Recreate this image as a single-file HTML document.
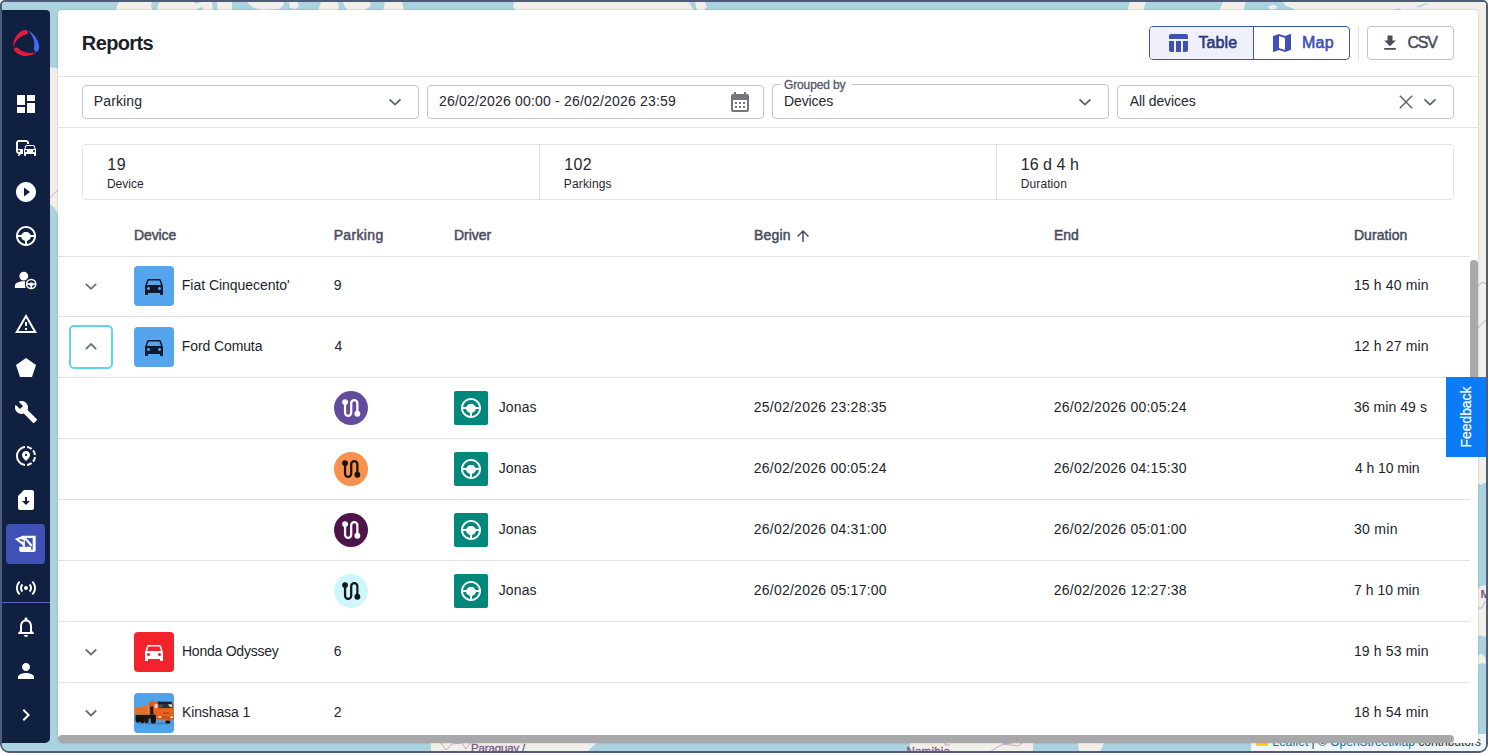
<!DOCTYPE html>
<html lang="en">
<head>
<meta charset="utf-8">
<title>Reports</title>
<style>
*{box-sizing:border-box;margin:0;padding:0}
html,body{width:1488px;height:753px;overflow:hidden;background:#fff}
body{font-family:"Liberation Sans",sans-serif;color:#1c1f2b;font-size:14px;position:relative}
.abs{position:absolute}
#frame{position:absolute;left:0;top:0;width:1488px;height:753px;border:2px solid #4e5c79;border-radius:5px 5px 9px 9px;overflow:hidden;background:#aad3df}
#map{position:absolute;left:0;top:0;width:1484px;height:749px}
#side{position:absolute;left:0;top:8px;width:48px;height:733px;background:#0f2040;border-radius:0 4px 5px 0}
#side svg{position:absolute;left:12px;width:24px;height:24px;fill:#fff}
#side .act{position:absolute;left:4px;top:514px;width:39px;height:40px;border-radius:4px;background:#3f51b5}
#side .sep{position:absolute;left:0;top:592px;width:48px;height:1px;background:#5562c0}
#panel{position:absolute;left:56px;top:8px;width:1420px;height:733px;background:#fff;border-radius:4px;overflow:hidden;box-shadow:0 0 2px rgba(0,0,0,.25)}
.hl{position:absolute;left:0;height:1px;background:#e2e2e2}
.t{position:absolute;white-space:nowrap}
.sel{position:absolute;width:337px;height:34px;border:1px solid #c4c4c4;border-radius:4px;background:#fff}
</style>
</head>
<body>
<div id="frame">
<div id="map">
<svg width="1484" height="749" viewBox="2 2 1484 749" style="position:absolute;left:0;top:0">
<rect x="0" y="0" width="1490" height="755" fill="#aad3df"/>
<g fill="#f2efe9">
<path d="M119 2 L152 2 L151 6 L153 11 L116 11 L117 6 Z"/>
<path d="M160 2 L194 2 L196 4 L201 2 L212 2 L213 11 L204 11 L202 7 L197 9 L195 11 L157 11 L158 5 Z"/>
<path d="M217 2 L232 2 L232 11 L218 11 Z"/>
<path d="M247 2 L284 2 L283 6 L279 9 L262 10 L254 8 L250 5 Z"/>
<path d="M289 2 L298 2 L299 6 L296 9 L290 8 Z"/>
<path d="M321 2 L338 2 L339 8 L336 11 L318 11 Z"/>
<path d="M343 2 L370 2 L371 6 L366 9 L362 11 L348 11 L345 7 Z"/>
<path d="M385 2 L402 2 L404 11 L383 11 Z"/>
<path d="M514 2 L689 2 L691 6 L694 11 L516 11 L513 7 Z"/>
<path d="M695 2 L705 2 L707 7 L703 11 L697 10 Z"/>
<path d="M1130 2 L1146 2 L1143 11 L1127 11 Z"/>
<path d="M1223 2 L1246 2 L1243 11 L1219 11 Z"/>
<path d="M1283 2 L1488 2 L1488 24 L1470 24 L1470 11 L1297 11 L1292 8 L1286 6 Z"/>
<path d="M1268 7 L1272 4.500 L1277 6 L1276 9 L1270 9.500 Z"/>
<path d="M1478 10 L1488 10 L1488 482 L1484 483 L1481 485 L1478 484 Z"/>
<path d="M1478 589 L1481 586 L1488 585 L1488 634 L1484 637 L1480 635 L1478 636 Z"/>
<path d="M1478 655 L1482 654 L1485 657 L1486 664 L1482 663 L1478 665 Z"/>
<path d="M50 67 L53 68 L55 67.500 L58 69 L58 214 L56 210 L54 207 L52 206 L50 204 Z"/>
<path d="M431 743 L597 743 L592 747 L588 751 L431 751 Z"/>
<path d="M910 743 L1033 743 L1033 751 L910 751 Z"/>
<path d="M1078 743 L1104 743 L1100 751 L1079 751 Z"/>
</g>
<g fill="#aad3df"><path d="M1394 9.500 L1400 8.500 L1401 10 L1396 11 Z"/><path d="M1416 6.500 L1427 3 L1428 4 L1418 7.500 Z"/><path d="M441 744 L447 751 L451 744 L449 744 L447 748 L443 744 Z" fill="none"/></g>
<g fill="none" stroke="#b89bc4" stroke-width="0.800"><path d="M441 743 L446 750 L452 744 L462 743 L466 749 L470 743"/><path d="M991 751 L1003 744 L1012 743 M1003 744 L1018 746 L1022 743"/><path d="M945 743 L945 745 L950 745"/>
<path d="M50 198 Q54 193 58 190"/><path d="M1478 286 Q1482 280 1486 284"/><path d="M1478 328 Q1482 322 1486 320"/><path d="M1478 608 L1482 608 L1485 601"/></g>
<text x="471" y="752.300" font-family="Liberation Sans, sans-serif" font-size="11.500" font-weight="400" fill="#7b5a8c" stroke="#7b5a8c" stroke-width="0.350" letter-spacing="-0.150">Paraguay /</text>
<text x="906.500" y="755.300" font-family="Liberation Sans, sans-serif" font-size="11.500" font-weight="400" fill="#7b5a8c" stroke="#7b5a8c" stroke-width="0.350" letter-spacing="0.200">Namibia</text>
<text x="1480.500" y="598" font-family="Liberation Sans, sans-serif" font-size="11.500" font-weight="700" fill="#7b5a8c">M</text>
</svg>
<div style="position:absolute;right:0;bottom:0;height:17px;padding:0 5px 0 5px;background:rgba(255,255,255,.8);font-size:12px;line-height:17px;color:#333;white-space:nowrap"><span style="display:inline-block;width:12px;height:8px;margin-right:4px;background:linear-gradient(#4c7be1 50%,#ffd500 50%)"></span><span style="color:#0078a8">Leaflet</span> <span>|</span> © <span style="color:#0078a8">OpenStreetMap</span> contributors</div>

</div>
<div id="side">
<svg style="left:0;top:10px;width:56px;height:48px" viewBox="0 0 878 753">
<path fill="#e8193f" d="M178 430 C 160 330, 230 190, 350 158 C 395 148, 420 180, 400 212 C 385 232, 330 235, 270 280 C 215 325, 195 380, 178 430 Z"/>
<path fill="#e8193f" d="M548 503 C 490 550, 400 580, 310 555 C 240 535, 185 490, 188 455 C 192 425, 235 425, 265 450 C 320 500, 420 540, 548 503 Z"/>
<path fill="#4766ff" d="M405 156 C 500 210, 580 320, 582 420 C 583 470, 560 500, 535 498 C 505 495, 495 450, 505 400 C 520 320, 470 230, 405 156 Z"/>
</svg>
<div class="act"></div><div class="sep"></div>
<svg style="top:82px" viewBox="0 0 24 24"><path d="M3 13h8V3H3v10zm0 8h8v-6H3v6zm10 0h8V11h-8v10zm0-18v6h8V3h-8z"/></svg>
<svg style="top:126px" viewBox="0 0 24 24"><path d="M12 4H5C3.340 4 2 5.340 2 7v8c0 1.660 1.340 3 3 3l-1 1v1h1l2-2.030L9 18v-5H4V5.980L13 6v2h2V7c0-1.660-1.340-3-3-3zM5 14c.55 0 1 .45 1 1s-.45 1-1 1-1-.45-1-1 .45-1 1-1zm15.570-4.340c-.14-.4-.52-.66-.97-.66h-7.190c-.46 0-.83.26-.98.66L10 13.770l.010 5.510c0 .38.310.72.690.72h.62c.38 0 .68-.38.680-.76V18h8v1.240c0 .38.310.76.690.76h.61c.38 0 .69-.34.690-.72l.010-1.370v-4.140l-1.430-4.110zm-8.160.34h7.190l1.030 3h-9.250l1.030-3zM12 16c-.55 0-1-.45-1-1s.45-1 1-1 1 .45 1 1-.45 1-1 1zm8 0c-.55 0-1-.45-1-1s.45-1 1-1 1 .45 1 1-.45 1-1 1z"/></svg>
<svg style="top:170px" viewBox="0 0 24 24"><path d="M12 2C6.480 2 2 6.480 2 12s4.480 10 10 10 10-4.480 10-10S17.520 2 12 2zm-2 14.500v-9l6 4.500-6 4.500z"/></svg>
<svg style="top:214px" viewBox="0 0 24 24"><path d="M13,19.92C14.8,19.7 16.35,18.95 17.65,17.65C18.95,16.35 19.7,14.8 19.92,13H16.92C16.7,14 16.24,14.84 15.54,15.54C14.84,16.24 14,16.7 13,16.92V19.92M10,8H14L17,11H19.92C19.67,9.05 18.79,7.38 17.27,6C15.76,4.66 14,4 12,4C10,4 8.24,4.66 6.73,6C5.21,7.38 4.33,9.05 4.08,11H7L10,8M11,19.92V16.92C10,16.7 9.16,16.24 8.46,15.54C7.76,14.84 7.3,14 7.08,13H4.08C4.3,14.77 5.05,16.3 6.35,17.6C7.65,18.9 9.2,19.67 11,19.92M12,2C14.75,2 17.1,3 19.05,4.95C21,6.9 22,9.25 22,12C22,14.75 21,17.1 19.05,19.05C17.1,21 14.75,22 12,22C9.25,22 6.9,21 4.95,19.05C3,17.1 2,14.75 2,12C2,9.25 3,6.9 4.95,4.95C6.9,3 9.25,2 12,2Z"/></svg>
<svg style="top:258px" viewBox="0 0 24 24"><circle cx="9.800" cy="8.100" r="4.450"/><path d="M0.900 19.900 V17.700 C0.900 14.900 5.500 13.300 9.800 13.300 C11.300 13.300 12.600 13.500 13.800 13.800 C11.900 15.100 11 17.400 11.600 19.900 Z"/>
<circle cx="17.200" cy="16" r="6.400" fill="#0f2040"/><circle cx="17.200" cy="16" r="4.550" fill="none" stroke="#fff" stroke-width="1.600"/>
<path d="M12.900 15.300 L15.300 15.300 L16.200 14.400 H18.200 L19.100 15.300 L21.500 15.300 V16.700 L19.300 16.700 C19 17.600 18.500 18.100 17.900 18.300 V20.400 H16.500 V18.300 C15.900 18.100 15.400 17.600 15.100 16.700 L12.900 16.700 Z"/></svg>
<svg style="top:302px" viewBox="0 0 24 24"><path d="M12 5.990L19.530 19H4.470L12 5.990M12 2L1 21h22L12 2zm1 14h-2v2h2v-2zm0-6h-2v4h2v-4z"/></svg>
<svg style="top:346px" viewBox="0 0 24 24"><path d="M2 9l4 12h12l4-12-10-7z"/></svg>
<svg style="top:390px" viewBox="0 0 24 24"><path d="M22.700 19l-9.100-9.100c.9-2.300.4-5-1.500-6.900-2-2-5-2.400-7.400-1.300L9 6 6 9 1.600 4.700C.4 7.100.9 10.100 2.900 12.100c1.900 1.900 4.600 2.400 6.900 1.500l9.100 9.100c.4.4 1 .4 1.400 0l2.300-2.300c.5-.4.5-1.100.1-1.400z"/></svg>
<svg style="top:434px" viewBox="0 0 24 24"><path d="M13.020 19.930v2.020c2.010-.2 3.840-1 5.320-2.210l-1.420-1.430c-1.110.86-2.440 1.440-3.900 1.620zM4.030 12c0-4.050 3.030-7.410 6.950-7.930V2.050C5.950 2.580 2.030 6.840 2.030 12c0 5.160 3.920 9.420 8.950 9.950v-2.020c-3.920-.52-6.950-3.880-6.950-7.930zm15.920-1h2.020c-.2-2.010-1-3.840-2.210-5.320l-1.430 1.430c.86 1.100 1.440 2.430 1.620 3.890zm-1.610-6.740c-1.480-1.210-3.320-2.010-5.320-2.210v2.020c1.460.18 2.790.76 3.900 1.620l1.420-1.430zm-.010 12.640l1.430 1.420c1.210-1.480 2.010-3.310 2.210-5.320h-2.020c-.18 1.460-.76 2.790-1.620 3.900zM16 11.100C16 8.610 14.100 7 12 7s-4 1.610-4 4.100c0 1.660 1.330 3.630 4 5.900 2.670-2.270 4-4.240 4-5.900zm-4 .9c-.59 0-1.070-.48-1.070-1.070 0-.59.48-1.070 1.070-1.070s1.070.48 1.070 1.070c0 .59-.48 1.070-1.070 1.070z"/></svg>
<svg style="top:478px" viewBox="0 0 24 24"><path d="M18 2h-8L4 8v12c0 1.100.9 2 2 2h12c1.100 0 2-.9 2-2V4c0-1.100-.9-2-2-2zm-6 15l-4-4h3V9.020L13 9v4h3l-4 4z"/></svg>
<svg style="left:8px;top:520px;width:32px;height:28px" viewBox="0 0 861 753">
<path d="M330 155 H690 V545 Q690 590 640 590 H290 Q250 590 250 550 V450 H570 V530 H610 V215 H330 Z"/>
<path fill-rule="evenodd" d="M130 240 L330 158 L425 215 L400 300 V450 H340 V405 Z M235 252 Q310 222 392 300 Q330 350 235 252 Z"/>
<path d="M410 225 L565 405" fill="none" stroke="#fff" stroke-width="58" stroke-linecap="round"/></svg>
<svg style="top:566px" viewBox="0 0 24 24"><path d="M7.760 16.240C6.670 15.160 6 13.660 6 12s.67-3.160 1.760-4.240l1.420 1.420C8.450 9.900 8 10.900 8 12c0 1.100.45 2.100 1.170 2.830l-1.410 1.410zm8.480 0C17.330 15.160 18 13.660 18 12s-.67-3.160-1.760-4.240l-1.420 1.420C15.550 9.900 16 10.900 16 12c0 1.100-.45 2.100-1.170 2.830l1.410 1.410zM12 10c-1.100 0-2 .9-2 2s.9 2 2 2 2-.9 2-2-.9-2-2-2zm8 2c0 2.210-.9 4.210-2.350 5.650l1.420 1.420C20.880 17.260 22 14.760 22 12s-1.120-5.260-2.930-7.070l-1.420 1.420C19.100 7.790 20 9.790 20 12zM6.350 6.350L4.930 4.930C3.120 6.740 2 9.240 2 12s1.120 5.260 2.930 7.070l1.420-1.420C4.900 16.210 4 14.210 4 12s.9-4.210 2.350-5.650z"/></svg>
<svg style="top:605px" viewBox="0 0 24 24"><path d="M12 22c1.100 0 2-.9 2-2h-4c0 1.100.9 2 2 2zm6-6v-5c0-3.070-1.630-5.640-4.500-6.320V4c0-.83-.67-1.500-1.500-1.500s-1.500.67-1.500 1.500v.68C7.640 5.360 6 7.920 6 11v5l-2 2v1h16v-1l-2-2zm-2 1H8v-6c0-2.480 1.510-4.500 4-4.500s4 2.020 4 4.500v6z"/></svg>
<svg style="top:649px" viewBox="0 0 24 24"><path d="M12 12c2.210 0 4-1.790 4-4s-1.790-4-4-4-4 1.790-4 4 1.790 4 4 4zm0 2c-2.670 0-8 1.340-8 4v2h16v-2c0-2.660-5.330-4-8-4z"/></svg>
<svg style="top:693px" viewBox="0 0 24 24"><path d="M10 6L8.590 7.410 13.170 12l-4.580 4.590L10 18l6-6z"/></svg>
</div>
<div id="panel">
<div class="hl" style="top:66px;width:1420px"></div>
<div class="hl" style="top:117px;width:1420px"></div>
<div class="abs" style="left:1091px;top:16px;width:201px;height:34px;border:1px solid #3f51b5;border-radius:4px;overflow:hidden;background:#fff"><div class="abs" style="left:0;top:0;width:104px;height:32px;background:#eff0fa;border-right:1px solid #3f51b5"></div></div>
<svg class="abs" style="left:1108.00px;top:21.00px" width="24" height="24" viewBox="0 0 24 24" fill="#3f51b5"><path d="M10 10.02h5V21h-5zM17 21h3c1.100 0 2-.9 2-2v-9h-5v11zm3-18H5c-1.100 0-2 .9-2 2v3h19V5c0-1.100-.9-2-2-2zM3 19c0 1.100.9 2 2 2h3V10H3v9z"/></svg>
<svg class="abs" style="left:1212.00px;top:21.00px" width="24" height="24" viewBox="0 0 24 24" fill="#3f51b5"><path d="M20.5 3l-.16.03L15 5.100 9 3 3.360 4.900c-.21.070-.36.250-.36.480V20.500c0 .28.220.5.500.5l.16-.030L9 18.900l6 2.100 5.640-1.900c.21-.070.36-.250.360-.480V3.500c0-.28-.22-.5-.5-.5zM15 19l-6-2.110V5l6 2.110V19z"/></svg>
<div class="abs" style="left:1300px;top:16px;width:1px;height:34px;background:#e2e2e2"></div>
<div class="abs" style="left:1309px;top:16px;width:87px;height:34px;border:1px solid #c4c4c4;border-radius:4px;background:#fff"></div>
<svg class="abs" style="left:1321.50px;top:23.00px" width="20" height="20" viewBox="0 0 24 24" fill="#4a4c5e"><path d="M19 9h-4V3H9v6H5l7 7 7-7zM5 18v2h14v-2H5z"/></svg>
<div class="sel" style="left:24px;top:75px"></div>
<svg class="abs" style="left:0;top:0;overflow:visible" width="1" height="1"><path d="M331.50 89.30 L337.00 94.50 L342.50 89.30" fill="none" stroke="#5b5e6b" stroke-width="1.7"/></svg>
<div class="sel" style="left:369px;top:75px"></div>
<div class="sel" style="left:714px;top:74px;height:35px"></div>
<svg class="abs" style="left:0;top:0;overflow:visible" width="1" height="1"><path d="M1021.50 89.30 L1027.00 94.50 L1032.50 89.30" fill="none" stroke="#5b5e6b" stroke-width="1.7"/></svg>
<div class="sel" style="left:1059px;top:75px"></div>
<svg class="abs" style="left:0;top:0;overflow:visible" width="1" height="1"><path d="M1366.50 89.30 L1372.00 94.50 L1377.50 89.30" fill="none" stroke="#5b5e6b" stroke-width="1.7"/></svg>
<svg class="abs" style="left:670.00px;top:80.00px" width="24" height="24" viewBox="0 0 24 24" fill="#75777f"><path d="M19 4h-1V2h-2v2H8V2H6v2H5c-1.110 0-1.990.9-1.990 2L3 20c0 1.100.89 2 2 2h14c1.100 0 2-.9 2-2V6c0-1.100-.9-2-2-2zm0 16H5V10h14v10zM9 14H7v-2h2v2zm4 0h-2v-2h2v2zm4 0h-2v-2h2v2zm-8 4H7v-2h2v2zm4 0h-2v-2h2v2zm4 0h-2v-2h2v2z"/></svg>
<div class="abs" style="left:723px;top:74px;width:71px;height:4px;background:#fff"></div>
<svg class="abs" style="left:1341.10px;top:84.80px" width="14" height="14" viewBox="0 0 14 14"><path d="M0.800 0.800 L13.200 13.200 M13.200 0.800 L0.800 13.200" fill="none" stroke="#5b5e6b" stroke-width="1.400"/></svg>
<div class="abs" style="left:24px;top:134px;width:1372px;height:56px;border:1px solid #e2e2e2;border-radius:4px"></div>
<div class="abs" style="left:481px;top:135px;width:1px;height:54px;background:#e2e2e2"></div>
<div class="abs" style="left:938px;top:135px;width:1px;height:54px;background:#e2e2e2"></div>
<svg class="abs" style="left:736.00px;top:217.00px" width="18" height="18" viewBox="0 0 24 24" fill="#4a4c5e"><path d="M4 12l1.410 1.410L11 7.830V20h2V7.830l5.580 5.590L20 12l-8-8-8 8z"/></svg>
<div class="hl" style="top:246px;width:1412px"></div>
<div class="hl" style="top:306px;width:1412px"></div>
<div class="hl" style="top:367px;width:1412px"></div>
<div class="hl" style="top:428px;width:1412px"></div>
<div class="hl" style="top:489px;width:1412px"></div>
<div class="hl" style="top:550px;width:1412px"></div>
<div class="hl" style="top:611px;width:1412px"></div>
<div class="hl" style="top:672px;width:1412px"></div>
<svg class="abs" style="left:0;top:0;overflow:visible" width="1" height="1"><path d="M27.80 273.80 L33.00 278.80 L38.20 273.80" fill="none" stroke="#6b6f7b" stroke-width="1.8"/></svg>
<div class="abs" style="left:76px;top:256px;width:40px;height:40px;border-radius:4px;background:#55a5ee;overflow:hidden"><svg class="abs" style="left:8px;top:8px" width="24" height="24" viewBox="0 0 24 24" fill="#0f1b2d"><path d="M18.92 6.01C18.72 5.42 18.16 5 17.5 5h-11c-.66 0-1.21.42-1.42 1.01L3 12v8c0 .55.45 1 1 1h1c.55 0 1-.45 1-1v-1h12v1c0 .55.45 1 1 1h1c.55 0 1-.45 1-1v-8l-2.080-5.990zM6.500 16c-.83 0-1.500-.67-1.500-1.500S5.670 13 6.500 13s1.500.67 1.500 1.500S7.330 16 6.500 16zm11 0c-.83 0-1.500-.67-1.500-1.500s.67-1.500 1.500-1.500 1.500.67 1.500 1.500-.67 1.500-1.500 1.500zM5 11l1.500-4.500h11L19 11H5z"/></svg></div>
<div class="abs" style="left:11px;top:315px;width:44px;height:44px;border:2px solid #62d4ea;border-radius:5px"></div>
<svg class="abs" style="left:0;top:0;overflow:visible" width="1" height="1"><path d="M27.80 339.10 L33.00 334.10 L38.20 339.10" fill="none" stroke="#6b6f7b" stroke-width="1.8"/></svg>
<div class="abs" style="left:76px;top:317px;width:40px;height:40px;border-radius:4px;background:#55a5ee;overflow:hidden"><svg class="abs" style="left:8px;top:8px" width="24" height="24" viewBox="0 0 24 24" fill="#0f1b2d"><path d="M18.92 6.01C18.72 5.42 18.16 5 17.5 5h-11c-.66 0-1.21.42-1.42 1.01L3 12v8c0 .55.45 1 1 1h1c.55 0 1-.45 1-1v-1h12v1c0 .55.45 1 1 1h1c.55 0 1-.45 1-1v-8l-2.080-5.990zM6.500 16c-.83 0-1.500-.67-1.500-1.500S5.670 13 6.500 13s1.500.67 1.500 1.500S7.330 16 6.500 16zm11 0c-.83 0-1.500-.67-1.500-1.500s.67-1.500 1.500-1.500 1.500.67 1.500 1.500-.67 1.500-1.500 1.500zM5 11l1.500-4.500h11L19 11H5z"/></svg></div>
<svg class="abs" style="left:276px;top:381px" width="34" height="34" viewBox="0 0 34 34"><circle cx="17" cy="17" r="17" fill="#634c9c"/><path d="M11.050 11.100 V21.700 a3.075 3.075 0 0 0 6.150 0 V12.300 a3.075 3.075 0 0 1 6.150 0 V22.700" fill="none" stroke="#ffffff" stroke-width="2.250"/><circle cx="11.050" cy="11.100" r="2.950" fill="#ffffff"/><circle cx="23.350" cy="22.750" r="2.950" fill="#ffffff"/></svg>
<div class="abs" style="left:396px;top:381px;width:34px;height:34px;border-radius:2px;background:#00897b"><svg class="abs" style="left:5px;top:5px" width="24" height="24" viewBox="0 0 24 24" fill="#fff"><path d="M13,19.92C14.8,19.7 16.35,18.95 17.65,17.65C18.95,16.35 19.7,14.8 19.92,13H16.92C16.7,14 16.24,14.84 15.54,15.54C14.84,16.24 14,16.7 13,16.92V19.92M10,8H14L17,11H19.92C19.67,9.05 18.79,7.38 17.27,6C15.76,4.66 14,4 12,4C10,4 8.24,4.66 6.73,6C5.21,7.38 4.33,9.05 4.08,11H7L10,8M11,19.92V16.92C10,16.7 9.16,16.24 8.46,15.54C7.76,14.84 7.3,14 7.08,13H4.08C4.3,14.77 5.05,16.3 6.35,17.6C7.65,18.9 9.2,19.67 11,19.92M12,2C14.75,2 17.1,3 19.05,4.95C21,6.9 22,9.25 22,12C22,14.75 21,17.1 19.05,19.05C17.1,21 14.75,22 12,22C9.25,22 6.9,21 4.95,19.05C3,17.1 2,14.75 2,12C2,9.25 3,6.9 4.95,4.95C6.9,3 9.25,2 12,2Z"/></svg></div>
<svg class="abs" style="left:276px;top:442px" width="34" height="34" viewBox="0 0 34 34"><circle cx="17" cy="17" r="17" fill="#f7914d"/><path d="M11.050 11.100 V21.700 a3.075 3.075 0 0 0 6.150 0 V12.300 a3.075 3.075 0 0 1 6.150 0 V22.700" fill="none" stroke="#1a1210" stroke-width="2.250"/><circle cx="11.050" cy="11.100" r="2.950" fill="#1a1210"/><circle cx="23.350" cy="22.750" r="2.950" fill="#1a1210"/></svg>
<div class="abs" style="left:396px;top:442px;width:34px;height:34px;border-radius:2px;background:#00897b"><svg class="abs" style="left:5px;top:5px" width="24" height="24" viewBox="0 0 24 24" fill="#fff"><path d="M13,19.92C14.8,19.7 16.35,18.95 17.65,17.65C18.95,16.35 19.7,14.8 19.92,13H16.92C16.7,14 16.24,14.84 15.54,15.54C14.84,16.24 14,16.7 13,16.92V19.92M10,8H14L17,11H19.92C19.67,9.05 18.79,7.38 17.27,6C15.76,4.66 14,4 12,4C10,4 8.24,4.66 6.73,6C5.21,7.38 4.33,9.05 4.08,11H7L10,8M11,19.92V16.92C10,16.7 9.16,16.24 8.46,15.54C7.76,14.84 7.3,14 7.08,13H4.08C4.3,14.77 5.05,16.3 6.35,17.6C7.65,18.9 9.2,19.67 11,19.92M12,2C14.75,2 17.1,3 19.05,4.95C21,6.9 22,9.25 22,12C22,14.75 21,17.1 19.05,19.05C17.1,21 14.75,22 12,22C9.25,22 6.9,21 4.95,19.05C3,17.1 2,14.75 2,12C2,9.25 3,6.9 4.95,4.95C6.9,3 9.25,2 12,2Z"/></svg></div>
<svg class="abs" style="left:276px;top:503px" width="34" height="34" viewBox="0 0 34 34"><circle cx="17" cy="17" r="17" fill="#4d1549"/><path d="M11.050 11.100 V21.700 a3.075 3.075 0 0 0 6.150 0 V12.300 a3.075 3.075 0 0 1 6.150 0 V22.700" fill="none" stroke="#ffffff" stroke-width="2.250"/><circle cx="11.050" cy="11.100" r="2.950" fill="#ffffff"/><circle cx="23.350" cy="22.750" r="2.950" fill="#ffffff"/></svg>
<div class="abs" style="left:396px;top:503px;width:34px;height:34px;border-radius:2px;background:#00897b"><svg class="abs" style="left:5px;top:5px" width="24" height="24" viewBox="0 0 24 24" fill="#fff"><path d="M13,19.92C14.8,19.7 16.35,18.95 17.65,17.65C18.95,16.35 19.7,14.8 19.92,13H16.92C16.7,14 16.24,14.84 15.54,15.54C14.84,16.24 14,16.7 13,16.92V19.92M10,8H14L17,11H19.92C19.67,9.05 18.79,7.38 17.27,6C15.76,4.66 14,4 12,4C10,4 8.24,4.66 6.73,6C5.21,7.38 4.33,9.05 4.08,11H7L10,8M11,19.92V16.92C10,16.7 9.16,16.24 8.46,15.54C7.76,14.84 7.3,14 7.08,13H4.08C4.3,14.77 5.05,16.3 6.35,17.6C7.65,18.9 9.2,19.67 11,19.92M12,2C14.75,2 17.1,3 19.05,4.95C21,6.9 22,9.25 22,12C22,14.75 21,17.1 19.05,19.05C17.1,21 14.75,22 12,22C9.25,22 6.9,21 4.95,19.05C3,17.1 2,14.75 2,12C2,9.25 3,6.9 4.95,4.95C6.9,3 9.25,2 12,2Z"/></svg></div>
<svg class="abs" style="left:276px;top:564px" width="34" height="34" viewBox="0 0 34 34"><circle cx="17" cy="17" r="17" fill="#cdf6fd"/><path d="M11.050 11.100 V21.700 a3.075 3.075 0 0 0 6.150 0 V12.300 a3.075 3.075 0 0 1 6.150 0 V22.700" fill="none" stroke="#14181c" stroke-width="2.250"/><circle cx="11.050" cy="11.100" r="2.950" fill="#14181c"/><circle cx="23.350" cy="22.750" r="2.950" fill="#14181c"/></svg>
<div class="abs" style="left:396px;top:564px;width:34px;height:34px;border-radius:2px;background:#00897b"><svg class="abs" style="left:5px;top:5px" width="24" height="24" viewBox="0 0 24 24" fill="#fff"><path d="M13,19.92C14.8,19.7 16.35,18.95 17.65,17.65C18.95,16.35 19.7,14.8 19.92,13H16.92C16.7,14 16.24,14.84 15.54,15.54C14.84,16.24 14,16.7 13,16.92V19.92M10,8H14L17,11H19.92C19.67,9.05 18.79,7.38 17.27,6C15.76,4.66 14,4 12,4C10,4 8.24,4.66 6.73,6C5.21,7.38 4.33,9.05 4.08,11H7L10,8M11,19.92V16.92C10,16.7 9.16,16.24 8.46,15.54C7.76,14.84 7.3,14 7.08,13H4.08C4.3,14.77 5.05,16.3 6.35,17.6C7.65,18.9 9.2,19.67 11,19.92M12,2C14.75,2 17.1,3 19.05,4.95C21,6.9 22,9.25 22,12C22,14.75 21,17.1 19.05,19.05C17.1,21 14.75,22 12,22C9.25,22 6.9,21 4.95,19.05C3,17.1 2,14.75 2,12C2,9.25 3,6.9 4.95,4.95C6.9,3 9.25,2 12,2Z"/></svg></div>
<svg class="abs" style="left:0;top:0;overflow:visible" width="1" height="1"><path d="M27.80 639.50 L33.00 644.50 L38.20 639.50" fill="none" stroke="#6b6f7b" stroke-width="1.8"/></svg>
<div class="abs" style="left:76px;top:622px;width:40px;height:40px;border-radius:4px;background:#f2232c;overflow:hidden"><svg class="abs" style="left:8px;top:8px" width="24" height="24" viewBox="0 0 24 24" fill="#ffffff"><path d="M18.92 6.01C18.72 5.42 18.16 5 17.5 5h-11c-.66 0-1.21.42-1.42 1.01L3 12v8c0 .55.45 1 1 1h1c.55 0 1-.45 1-1v-1h12v1c0 .55.45 1 1 1h1c.55 0 1-.45 1-1v-8l-2.080-5.990zM6.500 16c-.83 0-1.500-.67-1.500-1.500S5.670 13 6.500 13s1.500.67 1.500 1.500S7.330 16 6.500 16zm11 0c-.83 0-1.500-.67-1.500-1.500s.67-1.500 1.500-1.500 1.500.67 1.500 1.500-.67 1.500-1.500 1.500zM5 11l1.500-4.500h11L19 11H5z"/></svg></div>
<svg class="abs" style="left:0;top:0;overflow:visible" width="1" height="1"><path d="M27.80 700.50 L33.00 705.50 L38.20 700.50" fill="none" stroke="#6b6f7b" stroke-width="1.8"/></svg>
<div class="abs" style="left:76px;top:683px;width:40px;height:40px;border-radius:4px;background:#4fa3eb;overflow:hidden"><svg class="abs" style="left:0;top:0" width="40" height="40" viewBox="0 0 40 40">
<ellipse cx="20" cy="30.300" rx="18" ry="1.300" fill="#3d6f9e" opacity=".55"/>
<path d="M1.500 21.500 L22 21.500 L22 25.500 L1.800 25.500 Z" fill="#1d1a18"/>
<ellipse cx="3.800" cy="26" rx="2.300" ry="3.800" fill="#15120f"/><ellipse cx="8.200" cy="26.200" rx="2.600" ry="3.900" fill="#15120f"/><ellipse cx="12.500" cy="26.400" rx="2.300" ry="3.600" fill="#1c1815"/>
<ellipse cx="19.300" cy="26.700" rx="2.700" ry="3.900" fill="#15120f"/><ellipse cx="33.800" cy="28.800" rx="2.600" ry="1.900" fill="#15120f"/>
<path d="M0.600 14.400 L14.600 12.600 L15.900 21.700 L0.500 21.800 Z" fill="#ee7a2c"/>
<path d="M2.200 14.800 V21 M4.200 14.600 V21 M6.200 14.300 V21 M8.200 14 V21 M10.200 13.800 V21 M12.200 13.500 V21" stroke="#d6601c" stroke-width="0.800" fill="none"/>
<path d="M14.600 8.700 L20.600 8.300 L20.800 21.700 L15.900 21.700 Z" fill="#d85c1a"/>
<path d="M16.200 13.600 L19.400 13.400 L19.600 21.700 L16.200 21.700 Z" fill="#1f1a17"/>
<path d="M19.400 10 Q19.600 9 21 8.800 L37.500 9.200 Q39.300 10 39.500 12 L39.800 26.500 L36.500 27.500 L30.800 27.500 L22.500 27 L21.500 21 L19.600 20.500 Z" fill="#ea631d"/>
<path d="M23.600 8.600 L37.600 8.700 L38.200 11 L24 11 Z" fill="#1e2226"/>
<path d="M24.400 11 L38.300 11 L38.800 14.900 L24.800 15.200 Z" fill="#2b3036"/>
<path d="M34 11.300 L37.800 11.300 L38.400 14.300 L35.500 13.800 Z" fill="#cfd6dc"/><path d="M25.500 11.500 L29 11.500 L28 14.800 L25.200 14.800 Z" fill="#4b545c"/>
<path d="M20.600 11.800 Q20.800 10.800 22 10.900 L23.400 11 L23.600 15 L20.800 15.200 Z" fill="#d9dcdf"/>
<path d="M23.800 22.800 L39.800 23.200 L39.800 26.300 L24 26 Z" fill="#c9521a"/>
<rect x="24.200" y="23.300" width="3.200" height="1.500" fill="#fff5e6"/><rect x="36.200" y="23.600" width="3" height="1.500" fill="#fff5e6"/>
<rect x="29" y="19.300" width="6" height="1.800" rx=".5" fill="#b94a14"/>
</svg></div>
<div class="abs" style="left:1412px;top:250px;width:8px;height:130px;background:#a8a8aa;border-radius:4px 4px 0 0"></div>
<div class="abs" style="left:0;top:725px;width:1396px;height:8px;background:#a8a8aa;border-radius:4px"></div>
<span class="t" id="gb" style="left:726.00px;top:68.10px;font-size:12px;line-height:14px;color:#55586a;-webkit-text-stroke:0.3px #55586a;letter-spacing:-0.13px">Grouped by</span>
<span class="t" style="left:23.85px;top:21.00px;font-size:20px;line-height:24px;letter-spacing:-0.633px;color:#1c1f2b;font-weight:700;">Reports</span>
<span class="t" style="left:1140.45px;top:23.00px;font-size:16px;line-height:19px;letter-spacing:0.125px;color:#2c387e;-webkit-text-stroke:0.6px #2c387e;">Table</span>
<span class="t" style="left:1243.95px;top:23.00px;font-size:16px;line-height:19px;letter-spacing:0.250px;color:#3f51b5;-webkit-text-stroke:0.6px #3f51b5;">Map</span>
<span class="t" style="left:1349.45px;top:23.00px;font-size:16px;line-height:19px;letter-spacing:-1.200px;color:#4a4c5e;-webkit-text-stroke:0.5px #4a4c5e;">CSV</span>
<span class="t" style="left:35.85px;top:82.00px;font-size:14px;line-height:18px;letter-spacing:0.100px;color:#26282f;">Parking</span>
<span class="t" style="left:380.95px;top:82.00px;font-size:14px;line-height:18px;letter-spacing:0.191px;color:#26282f;">26/02/2026 00:00 - 26/02/2026 23:59</span>
<span class="t" style="left:725.95px;top:82.00px;font-size:14px;line-height:18px;letter-spacing:-0.083px;color:#26282f;">Devices</span>
<span class="t" style="left:1071.65px;top:82.00px;font-size:14px;line-height:18px;letter-spacing:-0.090px;color:#26282f;">All devices</span>
<span class="t" style="left:49.20px;top:145.00px;font-size:16px;line-height:19px;letter-spacing:0.750px;color:#26282f;">19</span>
<span class="t" style="left:48.95px;top:166.00px;font-size:12px;line-height:16px;letter-spacing:0.000px;color:#26282f;">Device</span>
<span class="t" style="left:506.20px;top:145.00px;font-size:16px;line-height:19px;letter-spacing:0.425px;color:#26282f;">102</span>
<span class="t" style="left:505.85px;top:166.00px;font-size:12px;line-height:16px;letter-spacing:0.143px;color:#26282f;">Parkings</span>
<span class="t" style="left:962.75px;top:145.00px;font-size:16px;line-height:19px;letter-spacing:0.029px;color:#26282f;">16 d 4 h</span>
<span class="t" style="left:962.75px;top:166.00px;font-size:12px;line-height:16px;letter-spacing:0.100px;color:#26282f;">Duration</span>
<span class="t" style="left:75.95px;top:216.00px;font-size:14px;line-height:18px;letter-spacing:-0.080px;color:#4a4c5e;-webkit-text-stroke:0.5px #4a4c5e;">Device</span>
<span class="t" style="left:275.65px;top:216.00px;font-size:14px;line-height:18px;letter-spacing:0.350px;color:#4a4c5e;-webkit-text-stroke:0.5px #4a4c5e;">Parking</span>
<span class="t" style="left:395.95px;top:216.00px;font-size:14px;line-height:18px;letter-spacing:0.000px;color:#4a4c5e;-webkit-text-stroke:0.5px #4a4c5e;">Driver</span>
<span class="t" style="left:695.95px;top:216.00px;font-size:14px;line-height:18px;letter-spacing:0.188px;color:#4a4c5e;-webkit-text-stroke:0.5px #4a4c5e;">Begin</span>
<span class="t" style="left:995.95px;top:216.00px;font-size:14px;line-height:18px;letter-spacing:0.000px;color:#4a4c5e;-webkit-text-stroke:0.5px #4a4c5e;">End</span>
<span class="t" style="left:1295.95px;top:216.00px;font-size:14px;line-height:18px;letter-spacing:0.071px;color:#4a4c5e;-webkit-text-stroke:0.5px #4a4c5e;">Duration</span>
<span class="t" style="left:123.85px;top:266.00px;font-size:14px;line-height:18px;letter-spacing:-0.037px;color:#1c1f2b;">Fiat Cinquecento'</span>
<span class="t" style="left:275.70px;top:266.00px;font-size:14px;line-height:18px;letter-spacing:0.000px;color:#1c1f2b;">9</span>
<span class="t" style="left:1295.95px;top:266.00px;font-size:14px;line-height:18px;letter-spacing:0.140px;color:#1c1f2b;">15 h 40 min</span>
<span class="t" style="left:123.85px;top:327.00px;font-size:14px;line-height:18px;letter-spacing:-0.110px;color:#1c1f2b;">Ford Comuta</span>
<span class="t" style="left:276.45px;top:327.00px;font-size:14px;line-height:18px;letter-spacing:0.000px;color:#1c1f2b;">4</span>
<span class="t" style="left:1295.95px;top:327.00px;font-size:14px;line-height:18px;letter-spacing:0.140px;color:#1c1f2b;">12 h 27 min</span>
<span class="t" style="left:440.65px;top:388.00px;font-size:14px;line-height:18px;letter-spacing:0.150px;color:#1c1f2b;">Jonas</span>
<span class="t" style="left:695.70px;top:388.00px;font-size:14px;line-height:18px;letter-spacing:0.250px;color:#1c1f2b;">25/02/2026 23:28:35</span>
<span class="t" style="left:995.70px;top:388.00px;font-size:14px;line-height:18px;letter-spacing:0.250px;color:#1c1f2b;">26/02/2026 00:05:24</span>
<span class="t" style="left:1295.95px;top:388.00px;font-size:14px;line-height:18px;letter-spacing:0.060px;color:#1c1f2b;">36 min 49 s</span>
<span class="t" style="left:440.65px;top:449.00px;font-size:14px;line-height:18px;letter-spacing:0.150px;color:#1c1f2b;">Jonas</span>
<span class="t" style="left:695.70px;top:449.00px;font-size:14px;line-height:18px;letter-spacing:0.250px;color:#1c1f2b;">26/02/2026 00:05:24</span>
<span class="t" style="left:995.70px;top:449.00px;font-size:14px;line-height:18px;letter-spacing:0.250px;color:#1c1f2b;">26/02/2026 04:15:30</span>
<span class="t" style="left:1296.95px;top:449.00px;font-size:14px;line-height:18px;letter-spacing:-0.089px;color:#1c1f2b;">4 h 10 min</span>
<span class="t" style="left:440.65px;top:510.00px;font-size:14px;line-height:18px;letter-spacing:0.150px;color:#1c1f2b;">Jonas</span>
<span class="t" style="left:695.70px;top:510.00px;font-size:14px;line-height:18px;letter-spacing:0.250px;color:#1c1f2b;">26/02/2026 04:31:00</span>
<span class="t" style="left:995.70px;top:510.00px;font-size:14px;line-height:18px;letter-spacing:0.250px;color:#1c1f2b;">26/02/2026 05:01:00</span>
<span class="t" style="left:1295.95px;top:510.00px;font-size:14px;line-height:18px;letter-spacing:0.300px;color:#1c1f2b;">30 min</span>
<span class="t" style="left:440.65px;top:571.00px;font-size:14px;line-height:18px;letter-spacing:0.150px;color:#1c1f2b;">Jonas</span>
<span class="t" style="left:695.70px;top:571.00px;font-size:14px;line-height:18px;letter-spacing:0.250px;color:#1c1f2b;">26/02/2026 05:17:00</span>
<span class="t" style="left:995.70px;top:571.00px;font-size:14px;line-height:18px;letter-spacing:0.250px;color:#1c1f2b;">26/02/2026 12:27:38</span>
<span class="t" style="left:1295.95px;top:571.00px;font-size:14px;line-height:18px;letter-spacing:0.022px;color:#1c1f2b;">7 h 10 min</span>
<span class="t" style="left:123.95px;top:632.00px;font-size:14px;line-height:18px;letter-spacing:-0.229px;color:#1c1f2b;">Honda Odyssey</span>
<span class="t" style="left:275.70px;top:632.00px;font-size:14px;line-height:18px;letter-spacing:0.000px;color:#1c1f2b;">6</span>
<span class="t" style="left:1295.95px;top:632.00px;font-size:14px;line-height:18px;letter-spacing:0.140px;color:#1c1f2b;">19 h 53 min</span>
<span class="t" style="left:123.95px;top:693.00px;font-size:14px;line-height:18px;letter-spacing:-0.111px;color:#1c1f2b;">Kinshasa 1</span>
<span class="t" style="left:275.70px;top:693.00px;font-size:14px;line-height:18px;letter-spacing:0.000px;color:#1c1f2b;">2</span>
<span class="t" style="left:1295.95px;top:693.00px;font-size:14px;line-height:18px;letter-spacing:0.140px;color:#1c1f2b;">18 h 54 min</span>
</div>
<div id="fb" style="position:absolute;left:1444px;top:375px;width:40px;height:80px;background:#0a7cf8"><span style="position:absolute;left:20.2px;top:39.8px;transform:translate(-50%,-50%) rotate(-90deg) scaleX(0.925);color:#fff;font-size:15px;line-height:16px;-webkit-text-stroke:0.2px #fff;white-space:nowrap">Feedback</span></div>
</div>
</body>
</html>
